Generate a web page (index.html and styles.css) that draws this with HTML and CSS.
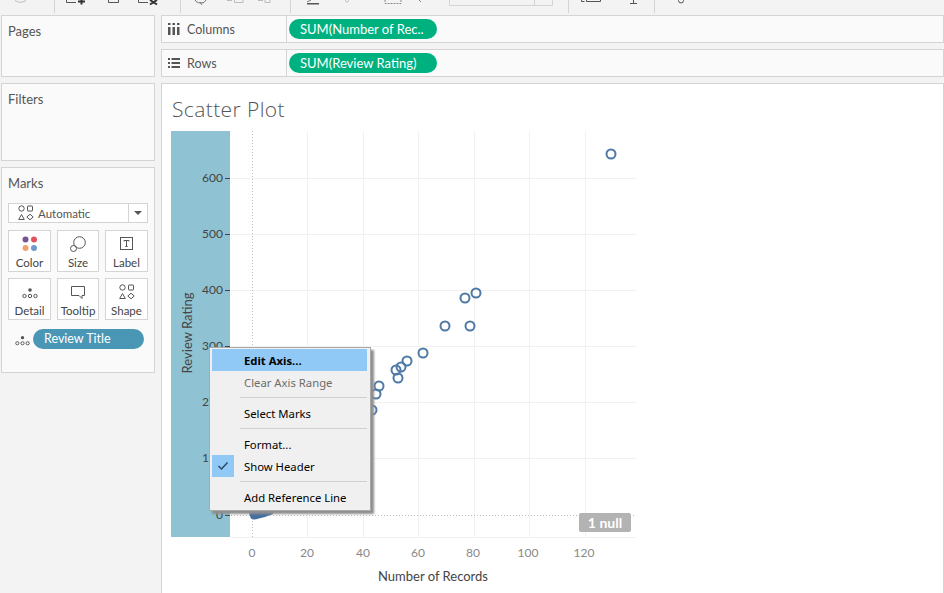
FILE: index.html
```html
<!DOCTYPE html>
<html>

<head>

	<title>Scatter Plot</title>

	<link rel="stylesheet" href="styles.css">

</head>

<body>

	<svg class="toolbar" width="944" height="15" viewBox="0 0 944 15">
		<g fill="none" stroke="#d4d4d4" stroke-width="1">
			<path d="M54.5 0V13M180.5 0V13M290.5 0V13M568.5 0V13M654.5 0V13"/>
			<path d="M449.5 0V5.5H552.5V0M534.5 0V5.5"/>
			<path d="M15 0.5Q20 4 26 0.5" stroke="#bbb"/>
		</g>
		<g fill="none" stroke="#555" stroke-width="1">
			<path d="M66.5 0V2.5H76"/>
			<path d="M108.5 0V2.5H118.5V0"/>
			<path d="M138.5 0V2.5H148"/>
			<path d="M195 0Q197 4 204 2.500M200 2L202 5M206 0L204 2.500" stroke="#777"/>
			<path d="M227 0.500H232M234.500 0V2.500H243V0" stroke="#bbb"/>
			<path d="M258 0.500H263M265 0V2.500H270V0" stroke="#bbb"/>
			<path d="M311 0L307 2" stroke="#777"/>
			<circle cx="347" cy="0.500" r="1.500" stroke="#bbb"/>
			<path d="M385 0V3.500H401V0" stroke="#888" stroke-dasharray="2 1"/>
			<path d="M419 0L421 2" stroke="#888"/>
			<path d="M581.500 0V1.500H584.500M586.500 0V1.500H600.500V0"/>
			<path d="M630 3.500H637M633.500 0V3.500"/>
			<circle cx="681" cy="0.500" r="2.500"/>
		</g>
		<path d="M78 1.500H85M81.500 0V4.500M150 0L157 4.500M157 0L150 4.500" stroke="#333" stroke-width="2" fill="none"/>
		<rect x="307" y="3" width="12" height="1.500" fill="#555"/>
	</svg>

	<div class="workspace">

		<div class="sidebar">
			<div class="panel pages">Pages</div>
			<div class="panel filters">Filters</div>
			<div class="panel marks">
				Marks
				<div class="markType">
					<svg class="shapesIcon" width="16" height="16" viewBox="0 0 16 16">
						<circle cx="3.500" cy="3.500" r="2.700"/>
						<rect x="9.500" y="1" width="5" height="5" rx="0.500"/>
						<path d="M3.500 9.500L6.300 14.500H0.700Z"/>
						<path d="M12 9.200L15.200 12L12 14.800L8.800 12Z"/>
					</svg>
					<span class="markName">Automatic</span>
					<span class="markArrow"></span>
				</div>
				<div class="cards">
					<div class="card">
						<svg class="cardIcon" width="16" height="16" viewBox="0 0 16 16">
							<circle cx="3.500" cy="3.500" r="3" fill="#76558f"/>
							<circle cx="12" cy="3.500" r="3" fill="#e0535f"/>
							<circle cx="3.500" cy="12" r="3" fill="#f2a26d"/>
							<circle cx="12" cy="12" r="3" fill="#6f9bc9"/>
						</svg>
						Color
					</div>
					<div class="card">
						<svg class="cardIcon line" width="16" height="16" viewBox="0 0 16 16">
							<circle cx="9.500" cy="6.500" r="5.800"/>
							<circle cx="3.500" cy="12.500" r="3"/>
						</svg>
						Size
					</div>
					<div class="card">
						<svg class="cardIcon line" width="16" height="16" viewBox="0 0 16 16">
							<rect x="1.500" y="1.500" width="12" height="12"/>
							<path d="M5 5.500V4.500H10V5.500M7.500 4.500V10.500M6.300 10.500H8.700"/>
						</svg>
						Label
					</div>
					<div class="card">
						<svg class="cardIcon line" width="16" height="16" viewBox="0 0 16 16">
							<circle cx="8" cy="6" r="1.800" fill="#555" stroke="none"/>
							<circle cx="2.500" cy="12" r="1.700"/>
							<circle cx="8" cy="12" r="1.700"/>
							<circle cx="13.500" cy="12" r="1.700"/>
						</svg>
						Detail
					</div>
					<div class="card">
						<svg class="cardIcon line" width="16" height="16" viewBox="0 0 16 16">
							<path d="M1.500 2.500H14.500V11.500H12V14.500L9 11.500H1.500Z"/>
						</svg>
						Tooltip
					</div>
					<div class="card">
						<svg class="cardIcon line" width="16" height="16" viewBox="0 0 16 16">
							<circle cx="3.500" cy="3.500" r="2.700"/>
							<rect x="9.500" y="1" width="5" height="5" rx="0.500"/>
							<path d="M3.500 9.500L6.300 14.500H0.700Z"/>
							<path d="M12 9.200L15.200 12L12 14.800L8.800 12Z"/>
						</svg>
						Shape
					</div>
				</div>
				<div class="detailRow">
					<svg class="line" width="15" height="15" viewBox="0 0 16 16">
						<circle cx="8" cy="6" r="1.800" fill="#555" stroke="none"/>
						<circle cx="2.500" cy="12" r="1.700"/>
						<circle cx="8" cy="12" r="1.700"/>
						<circle cx="13.500" cy="12" r="1.700"/>
					</svg>
					<span class="pill bluePill">Review Title</span>
				</div>
			</div>
		</div>

		<div class="main">
			<div class="shelf">
				<div class="shelfName">
					<svg width="12" height="12" viewBox="0 0 12 12" fill="#555">
						<rect x="0" y="4" width="2.500" height="8"/>
						<rect x="4.500" y="4" width="2.500" height="8"/>
						<rect x="9" y="4" width="2.500" height="8"/>
						<rect x="0" y="0" width="2.500" height="2"/>
						<rect x="4.500" y="0" width="2.500" height="2"/>
						<rect x="9" y="0" width="2.500" height="2"/>
					</svg>
					Columns
				</div>
				<span class="pill greenPill">SUM(Number of Rec..</span>
			</div>
			<div class="shelf">
				<div class="shelfName">
					<svg width="12" height="12" viewBox="0 0 12 12" fill="#555">
						<rect x="0" y="1" width="2" height="2"/>
						<rect x="3.500" y="1" width="8.500" height="2"/>
						<rect x="0" y="5" width="2" height="2"/>
						<rect x="3.500" y="5" width="8.500" height="2"/>
						<rect x="0" y="9" width="2" height="2"/>
						<rect x="3.500" y="9" width="8.500" height="2"/>
					</svg>
					Rows
				</div>
				<span class="pill greenPill">SUM(Review Rating)</span>
			</div>

			<div class="view">
				<h1 class="title">Scatter Plot</h1>

				<svg class="chart" width="473" height="452" viewBox="171 131 473 452">
					<rect x="171" y="131" width="59" height="406" fill="#8fc3d3"/>

					<g stroke="#f1f1f1" stroke-width="1" fill="none">
						<path d="M307.500 131V537M363.500 131V537M418.500 131V537M474.500 131V537M529.500 131V537M585.500 131V537"/>
						<path d="M231 178.500H636M231 234.500H636M231 290.500H636M231 346.500H636M231 402.500H636M231 458.500H636M231 537.500H636"/>
					</g>
					<g stroke="#bdbdbd" stroke-width="1" stroke-dasharray="1 2" fill="none">
						<path d="M252.500 131V537"/>
						<path d="M231 515.500H636"/>
					</g>

					<g stroke="#444" stroke-width="1">
						<path d="M225 178.500H230M225 234.500H230M225 290.500H230M225 346.500H230M225 402.500H230M225 458.500H230M225 515.500H230"/>
					</g>
					<g class="yTicks" text-anchor="end">
						<text x="223" y="182">600</text>
						<text x="223" y="238">500</text>
						<text x="223" y="294">400</text>
						<text x="223" y="350">300</text>
						<text x="223" y="406">200</text>
						<text x="223" y="462">100</text>
						<text x="223" y="519">0</text>
					</g>
					<text class="axisTitle" transform="translate(192 333) rotate(-90)" text-anchor="middle">Review Rating</text>

					<g class="xTicks" text-anchor="middle">
						<text x="252" y="557">0</text>
						<text x="307" y="557">20</text>
						<text x="363" y="557">40</text>
						<text x="418" y="557">60</text>
						<text x="473" y="557">80</text>
						<text x="528" y="557">100</text>
						<text x="584" y="557">120</text>
					</g>
					<text class="axisTitle" x="433" y="581" text-anchor="middle">Number of Records</text>

					<!-- the marks near zero overlap into one solid shape -->
					<path d="M249 500H273V514Q266 517 259 518.500Q253 520.500 251 518.500Q249 515 249 510Z" fill="#466f9e"/>
					<g fill="none" stroke="#4e79a7" stroke-width="2">
						<circle cx="611" cy="154" r="4.500"/>
						<circle cx="476" cy="293" r="4.500"/>
						<circle cx="465" cy="298" r="4.500"/>
						<circle cx="445" cy="326" r="4.500"/>
						<circle cx="470" cy="326" r="4.500"/>
						<circle cx="423" cy="353" r="4.500"/>
						<circle cx="407" cy="361" r="4.500"/>
						<circle cx="401" cy="367" r="4.500"/>
						<circle cx="396" cy="370" r="4.500"/>
						<circle cx="398" cy="378" r="4.500"/>
						<circle cx="379" cy="386" r="4.500"/>
						<circle cx="376" cy="394" r="4.500"/>
						<circle cx="372" cy="410" r="4.500"/>
					</g>
				</svg>

				<div class="nullBadge">1 null</div>

				<div class="menu">
					<div class="menuItem active">Edit Axis...</div>
					<div class="menuItem disabled">Clear Axis Range</div>
					<div class="menuSep"></div>
					<div class="menuItem">Select Marks</div>
					<div class="menuSep"></div>
					<div class="menuItem">Format...</div>
					<div class="menuItem">
						<span class="check">
							<svg width="12" height="10" viewBox="0 0 12 10" fill="none" stroke="#2a4a6a" stroke-width="1.500">
								<path d="M1.500 5L4.500 8L10.500 1.500"/>
							</svg>
						</span>
						Show Header
					</div>
					<div class="menuSep"></div>
					<div class="menuItem">Add Reference Line</div>
				</div>
			</div>
		</div>

	</div>

</body>

</html>
```

FILE: styles.css
```css
html, body {
	height: 100%;
}
body {
	margin: 0;
	overflow: hidden;
	background-color: #f3f3f3;
	font-family: Lato, "Liberation Sans", sans-serif;
	font-size: 12px;
	color: #555555;
}
.toolbar {
	display: block;
}
.workspace {
	display: flex;
	gap: 6px;
	padding-left: 1px;
	height: 578px;
}

/* left side */
.sidebar {
	width: 154px;
	flex: none;
	display: flex;
	flex-direction: column;
	gap: 6px;
}
.panel {
	box-sizing: border-box;
	background-color: #fafafa;
	border: 1px solid #d4d4d4;
	padding: 7px 6px;
	font-size: 13px;
	line-height: 16px;
}
.pages {
	height: 62px;
}
.filters {
	height: 78px;
}
.marks {
	height: 206px;
}
.markType {
	box-sizing: border-box;
	display: flex;
	align-items: center;
	width: 140px;
	height: 20px;
	margin-top: 12px;
	border: 1px solid #d4d4d4;
	background-color: #ffffff;
	font-size: 11.5px;
	line-height: 20px;
}
.shapesIcon {
	margin-left: 9px;
	fill: none;
	stroke: #555555;
}
.markName {
	margin-left: 4px;
	padding-top: 1px;
	flex: 1;
}
.markArrow {
	width: 18px;
	height: 18px;
	border-left: 1px solid #d4d4d4;
	display: flex;
	align-items: center;
	justify-content: center;
}
.markArrow::after {
	content: "";
	border-top: 4px solid #555555;
	border-left: 4px solid transparent;
	border-right: 4px solid transparent;
}
.cards {
	display: grid;
	grid-template-columns: 43px 42px 43px;
	gap: 6px;
	margin-top: 7px;
}
.card {
	box-sizing: border-box;
	height: 42px;
	border: 1px solid #d4d4d4;
	background-color: #ffffff;
	display: flex;
	flex-direction: column;
	align-items: center;
	font-size: 11.5px;
	line-height: 14px;
	color: #444444;
	padding-top: 5px;
	gap: 4px;
}
.line {
	fill: none;
	stroke: #555555;
}
.detailRow {
	display: flex;
	align-items: center;
	gap: 3px;
	margin-top: 9px;
}
.detailRow svg {
	margin-left: 7px;
}
.pill {
	box-sizing: border-box;
	display: block;
	height: 20px;
	line-height: 20px;
	border-radius: 10px;
	color: #ffffff;
	white-space: nowrap;
}
.bluePill {
	width: 111px;
	padding-left: 11px;
	background-color: #4a96b5;
	font-size: 12.5px;
}
.greenPill {
	width: 148px;
	padding-left: 11px;
	background-color: #00b180;
	margin-left: 2px;
	font-size: 13px;
}

/* right side */
.main {
	flex: 1;
	display: flex;
	flex-direction: column;
	gap: 6px;
}
.shelf {
	box-sizing: border-box;
	height: 28px;
	display: flex;
	align-items: center;
	background-color: #fafafa;
	border: 1px solid #d4d4d4;
}
.shelfName {
	box-sizing: border-box;
	width: 125px;
	height: 100%;
	display: flex;
	align-items: center;
	gap: 7px;
	padding-left: 6px;
	border-right: 1px solid #d4d4d4;
	font-size: 12.5px;
}
.view {
	flex: 1;
	position: relative;
	background-color: #ffffff;
	border: 1px solid #d4d4d4;
	border-bottom: none;
	padding-left: 9px;
}
.title {
	margin: 0;
	height: 47px;
	padding-top: 12px;
	padding-left: 1px;
	box-sizing: border-box;
	font-family: "Open Sans", sans-serif;
	font-size: 21px;
	font-weight: 300;
	letter-spacing: 0.4px;
	line-height: 26px;
	color: #555555;
}
.chart {
	display: block;
}
.yTicks text {
	font-size: 12px;
	fill: #444444;
}
.xTicks text {
	font-size: 12px;
	fill: #888888;
}
.axisTitle {
	font-size: 13px;
	fill: #444444;
}
.nullBadge {
	position: absolute;
	left: 417px;
	top: 429px;
	width: 52px;
	height: 19px;
	line-height: 19px;
	border-radius: 2px;
	text-align: center;
	font-size: 14px;
	font-weight: bold;
	color: #ffffff;
	background-color: #b3b3b3;
}

/* context menu */
.menu {
	position: absolute;
	left: 47px;
	top: 263px;
	width: 162px;
	box-sizing: border-box;
	padding: 1px 3px 2px 2px;
	background-color: #f0f0f0;
	border: 1px solid #a9a9a9;
	box-shadow: 3px 3px 2px #8f8f8f;
	font-family: "Noto Sans", sans-serif;
	font-size: 11.3px;
	color: #000000;
}
.menuItem {
	position: relative;
	height: 22px;
	line-height: 23px;
	padding-left: 32px;
}
.menuItem.active {
	background-color: #90c8f6;
	font-weight: bold;
}
.menuItem.disabled {
	color: #6d6d6d;
}
.menuSep {
	height: 1px;
	margin: 4px 0 4px 28px;
	background-color: #d0d0d0;
}
.check {
	position: absolute;
	left: 0;
	top: 0;
	width: 22px;
	height: 22px;
	background-color: #90c8f6;
	display: flex;
	align-items: center;
	justify-content: center;
}
```
